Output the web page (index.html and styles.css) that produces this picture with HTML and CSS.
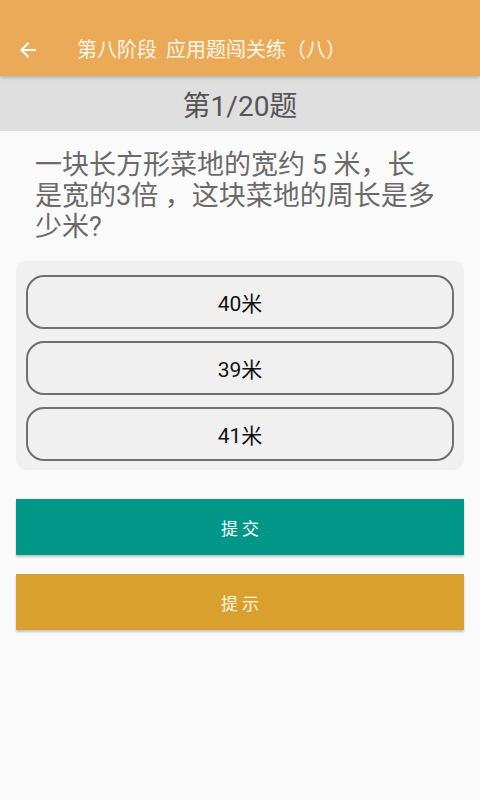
FILE: index.html
```html
<!DOCTYPE html>
<html lang="zh-CN">
<head>
<meta charset="utf-8">
<title>应用题闯关练</title>
<link rel="stylesheet" href="styles.css">
</head>
<body>
<header class="appbar">
  <svg class="back" width="24" height="24" viewBox="0 0 24 24"><path d="M20 11H7.83l5.59-5.59L12 4l-8 8 8 8 1.41-1.41L7.83 13H20v-2z" fill="#fff"/></svg>
  <span class="title">第八阶段<span class="sub">应用题闯关练（八）</span></span>
</header>
<div class="progress">第1/20题</div>
<main class="content">
  <p class="question">一块长方形菜地的宽约 5 米，长是宽的3倍 ，这块菜地的周长是多少米?</p>
  <div class="options">
    <div class="option">40米</div>
    <div class="option">39米</div>
    <div class="option">41米</div>
  </div>
  <button class="btn submit">提 交</button>
  <button class="btn hint">提 示</button>
</main>
</body>
</html>
```
FILE: styles.css
```css
* { box-sizing: border-box; }
html, body { margin: 0; padding: 0; }
body {
  background: #fafafa;
  font-family: Roboto, "Noto Sans CJK SC", sans-serif;
  width: 480px;
  min-height: 800px;
}
.appbar {
  height: 76px;
  padding-top: 24px;
  background: #ebaa57;
  display: flex;
  align-items: center;
  padding-left: 16px;
  box-shadow: 0 2px 3px rgba(0,0,0,0.18);
  position: relative;
  z-index: 1;
}
.back { display: block; flex: none; }
.title {
  margin-left: 37px;
  color: #fff7ea;
  font-size: 20px;
  line-height: 1;
  white-space: nowrap;
}
.sub { margin-left: 9px; }
.progress {
  height: 55px;
  background: #dfdfdf;
  color: #555;
  font-size: 28px;
  display: flex;
  align-items: center;
  justify-content: center;
}
.content {
  padding: 0 16px;
}
.question {
  margin: 19px 0 0 19px;
  width: 406px;
  font-size: 27px;
  line-height: 31px;
  color: #6a6a6a;
}
.options {
  margin-top: 18px;
  background: #f0f0f0;
  border-radius: 10px;
  padding: 14px 10px 9px;
  display: flex;
  flex-direction: column;
  gap: 12px;
}
.option {
  height: 54px;
  border: 2px solid #6f6f6f;
  border-radius: 18px;
  display: flex;
  align-items: center;
  justify-content: center;
  font-size: 21px;
  color: #111;
}
.btn {
  display: flex;
  align-items: center;
  justify-content: center;
  width: 100%;
  height: 56px;
  border: none;
  border-radius: 0;
  font-family: inherit;
  font-size: 17px;
  padding: 0;
  box-shadow: 0 2px 2px rgba(0,0,0,0.22);
}
.submit {
  margin-top: 29px;
  background: #009688;
  color: #fff;
}
.hint {
  margin-top: 19px;
  background: #d9a02e;
  color: #fff4e0;
}
```
